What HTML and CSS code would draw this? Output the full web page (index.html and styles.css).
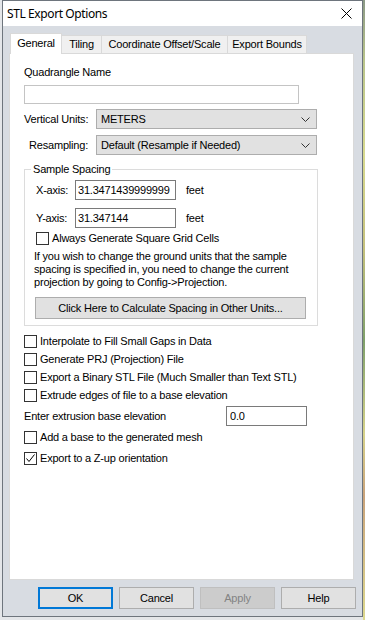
FILE: index.html
```html
<!DOCTYPE html>
<html lang="en">
<head>
    <meta charset="UTF-8">
    <title>STL Export Options</title>
    <link rel="stylesheet" href="styles.css">
</head>
<body>
    <div class="window">
        <div class="titlebar">
            <span class="title">STL Export Options</span>
            <svg class="close" width="11" height="11" viewBox="0 0 11 11">
                <path d="M0.5 0.5 L10.5 10.5 M10.5 0.5 L0.5 10.5" stroke="#000" stroke-width="1" fill="none"/>
            </svg>
        </div>

        <div class="client">
            <!-- tab strip -->
            <div class="tabs">
                <div class="tab active" style="width:52px">General</div>
                <div class="tab" style="width:41px">Tiling</div>
                <div class="tab" style="width:127px">Coordinate Offset/Scale</div>
                <div class="tab" style="width:80px">Export Bounds</div>
            </div>

            <div class="panel">
                <div class="field-label">Quadrangle Name</div>
                <input class="text-input quad" type="text" value="">

                <div class="select-row first">
                    <span class="row-label">Vertical Units:</span>
                    <div class="select">
                        <span>METERS</span>
                        <svg width="9" height="5" viewBox="0 0 9 5"><path d="M0.5 0.5 L4.5 4.5 L8.5 0.5" stroke="#333" fill="none"/></svg>
                    </div>
                </div>
                <div class="select-row">
                    <span class="row-label">Resampling:</span>
                    <div class="select">
                        <span>Default (Resample if Needed)</span>
                        <svg width="9" height="5" viewBox="0 0 9 5"><path d="M0.5 0.5 L4.5 4.5 L8.5 0.5" stroke="#333" fill="none"/></svg>
                    </div>
                </div>

                <fieldset class="group">
                    <legend>Sample Spacing</legend>
                    <div class="axis-row first">
                        <span class="axis-label">X-axis:</span>
                        <input class="text-input axis" type="text" value="31.3471439999999">
                        <span class="unit">feet</span>
                    </div>
                    <div class="axis-row">
                        <span class="axis-label">Y-axis:</span>
                        <input class="text-input axis" type="text" value="31.347144">
                        <span class="unit">feet</span>
                    </div>
                    <label class="check inner"><span class="box"></span>Always Generate Square Grid Cells</label>
                    <p class="note">If you wish to change the ground units that the sample<br>spacing is specified in, you need to change the current<br>projection by going to Config-&gt;Projection.</p>
                    <button class="btn wide">Click Here to Calculate Spacing in Other Units...</button>
                </fieldset>

                <label class="check first-check"><span class="box"></span>Interpolate to Fill Small Gaps in Data</label>
                <label class="check"><span class="box"></span>Generate PRJ (Projection) File</label>
                <label class="check"><span class="box"></span>Export a Binary STL File (Much Smaller than Text STL)</label>
                <label class="check"><span class="box"></span>Extrude edges of file to a base elevation</label>

                <div class="elev-row">
                    <span class="elev-label">Enter extrusion base elevation</span>
                    <input class="text-input elev" type="text" value="0.0">
                </div>

                <label class="check after-elev"><span class="box"></span>Add a base to the generated mesh</label>
                <label class="check last-check"><span class="box"><svg width="11" height="11" viewBox="0 0 11 11"><path d="M1.5 5.5 L4 8.5 L9.5 1.5" stroke="#000" stroke-width="1" fill="none"/></svg></span>Export to a Z-up orientation</label>
            </div>

            <div class="footer">
                <button class="btn dlg default">OK</button>
                <button class="btn dlg">Cancel</button>
                <button class="btn dlg" disabled>Apply</button>
                <button class="btn dlg">Help</button>
            </div>
        </div>
    </div>
    <div class="map-edge"></div>
</body>
</html>
```

FILE: styles.css
```css
* {
    box-sizing: border-box;
}
body {
    margin: 0;
    height: 620px;
    display: flex;
    background: #e4e6e9;
    font-family: "Liberation Sans", Arial, sans-serif;
    font-size: 11px;
    line-height: 13px;
    letter-spacing: -0.2px;
    color: #000;
    overflow: hidden;
}
.window {
    margin-left: 2px;
    width: 361px;
    height: 617px;
    border: 1px solid #6e757d;
    display: flex;
    flex-direction: column;
    background: #d8dce2;
}
/* strip of the map window behind the dialog */
.map-edge {
    flex: 1;
    background: linear-gradient(#8c9a86 0%, #b9c48a 10%, #d7d98f 25%, #c4c07c 40%, #7fa06a 55%, #d6d28a 70%, #c9a27a 80%, #dcd88e 100%);
}

.titlebar {
    height: 25px;
    flex: none;
    background: #fff;
    display: flex;
    align-items: center;
    justify-content: space-between;
    padding: 0 10px 0 4px;
}
.title {
    font-family: "Noto Sans", "Open Sans", sans-serif;
    font-size: 12px;
    letter-spacing: -0.4px;
}

.client {
    flex: 1;
    display: flex;
    flex-direction: column;
    padding-top: 7px;
}
.tabs {
    display: flex;
    align-items: flex-end;
    height: 20px;
    padding-left: 7px;
}
.tab {
    height: 18px;
    margin-left: -1px;
    border: 1px solid #d9d9d9;
    border-bottom: none;
    background: #f0f0f0;
    display: flex;
    align-items: center;
    justify-content: center;
    white-space: nowrap;
}
.tab.active {
    height: 21px;
    margin-left: 0;
    margin-bottom: -1px;
    padding-bottom: 1px;
    background: #fff;
    position: relative;
    z-index: 1;
}

.panel {
    flex: 1;
    margin: 0 8px 0 6px;
    background: #fff;
    border: 1px solid #d9d9d9;
    padding: 12px 0 0 14px;
}

.text-input {
    display: block;
    margin: 0;
    padding: 0 3px;
    font-family: inherit;
    font-size: 11px;
    letter-spacing: -0.2px;
    color: #000;
    background: #fff;
    border: 1px solid #7a7a7a;
    outline: none;
}
.quad {
    margin-top: 6px;
    width: 275px;
    height: 19px;
    border-color: #c4c4c4;
}

.select-row {
    display: flex;
    align-items: center;
    margin-top: 6px;
}
.select-row.first {
    margin-top: 5px;
}
.row-label {
    width: 72px;
    padding-right: 8px;
    text-align: right;
    white-space: nowrap;
}
.select {
    width: 221px;
    height: 20px;
    background: #e1e1e1;
    border: 1px solid #adadad;
    display: flex;
    align-items: center;
    justify-content: space-between;
    padding: 0 6px 0 4px;
}

/* Sample Spacing group */
.group {
    margin: 8px 0 0 0;
    width: 294px;
    border: 1px solid #dcdcdc;
    padding: 0 0 6px 10px;
}
.group legend {
    margin-left: -4px;
    padding: 0 2px;
}
.axis-row {
    display: flex;
    align-items: center;
    margin-top: 8px;
}
.axis-row.first {
    margin-top: 4px;
}
.axis-label {
    width: 40px;
    padding-left: 1px;
}
.axis {
    width: 101px;
    height: 20px;
    padding-left: 2px;
}
.unit {
    margin-left: 10px;
}
.note {
    margin: 5px 0 0 -1px;
    white-space: nowrap;
}

.check {
    display: flex;
    align-items: center;
    gap: 3px;
    height: 13px;
    margin-top: 5px;
    white-space: nowrap;
}
.check.inner {
    margin: 4px 0 0 1px;
}
.check.first-check {
    margin-top: 9px;
}
.check.after-elev {
    margin-top: 5px;
}
.check.last-check {
    margin-top: 8px;
}
.box {
    width: 13px;
    height: 13px;
    flex: none;
    border: 1px solid #333;
    background: #fff;
    display: flex;
    align-items: center;
    justify-content: center;
}

.elev-row {
    display: flex;
    align-items: center;
    margin-top: 4px;
}
.elev-label {
    width: 202px;
}
.elev {
    width: 81px;
    height: 20px;
}

/* buttons */
.btn {
    margin: 0;
    font-family: inherit;
    font-size: 11px;
    letter-spacing: -0.2px;
    color: #000;
    background: #e1e1e1;
    border: 1px solid #adadad;
    padding: 0;
}
.btn.wide {
    display: block;
    margin-top: 8px;
    width: 271px;
    height: 22px;
}
.footer {
    flex: none;
    display: flex;
    justify-content: flex-end;
    gap: 6px;
    padding: 7px 6px 7px 0;
}
.dlg {
    width: 75px;
    height: 22px;
}
.dlg.default {
    border: 2px solid #0078d7;
}
.dlg:disabled {
    background: #cccccc;
    border-color: #bfbfbf;
    color: #838383;
}
```
